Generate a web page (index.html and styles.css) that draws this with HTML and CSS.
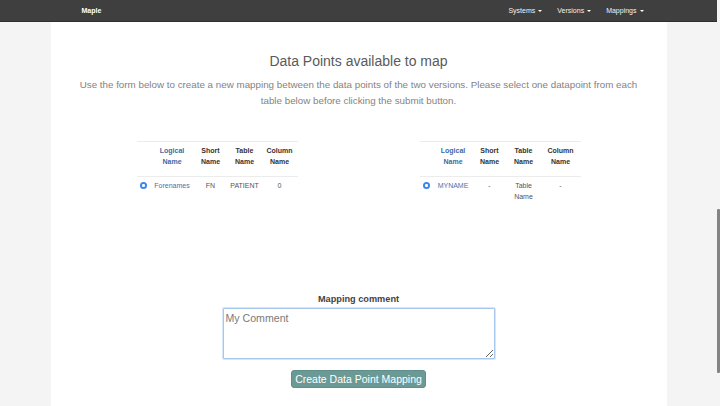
FILE: index.html
```html
<!DOCTYPE html>
<html lang="en">
<head>
<meta charset="utf-8">
<title>Maple - Data Points</title>
<link rel="stylesheet" href="styles.css">
</head>
<body>
<div class="page">
  <nav class="navbar">
    <div class="nav-inner">
      <span class="brand">Maple</span>
      <ul class="nav-menu">
        <li>Systems <span class="caret"></span></li>
        <li>Versions <span class="caret"></span></li>
        <li>Mappings <span class="caret"></span></li>
      </ul>
    </div>
  </nav>
  <main class="container">
    <h2 class="title">Data Points available to map</h2>
    <p class="lead">Use the form below to create a new mapping between the data points of the two versions. Please select one datapoint from each table below before clicking the submit button.</p>
    <div class="tables">
      <table class="dp dp-left">
        <thead>
          <tr>
            <th class="c-radio"></th>
            <th class="c-logical">Logical Name</th>
            <th class="c-short">Short Name</th>
            <th class="c-table">Table Name</th>
            <th class="c-column">Column Name</th>
          </tr>
        </thead>
        <tbody>
          <tr>
            <td class="c-radio"><span class="radio"></span></td>
            <td class="c-logical link">Forenames</td>
            <td>FN</td>
            <td>PATIENT</td>
            <td>0</td>
          </tr>
        </tbody>
      </table>
      <table class="dp dp-right">
        <thead>
          <tr>
            <th class="c-radio"></th>
            <th class="c-logical">Logical Name</th>
            <th class="c-short">Short Name</th>
            <th class="c-table">Table Name</th>
            <th class="c-column">Column Name</th>
          </tr>
        </thead>
        <tbody>
          <tr>
            <td class="c-radio"><span class="radio"></span></td>
            <td class="c-logical link">MYNAME</td>
            <td>-</td>
            <td>Table<br>Name</td>
            <td>-</td>
          </tr>
        </tbody>
      </table>
    </div>
    <form class="mapping-form">
      <label class="form-label" for="comment">Mapping comment</label>
      <textarea id="comment" class="comment" placeholder="My Comment"></textarea>
      <button type="button" class="btn">Create Data Point Mapping</button>
    </form>
  </main>
</div>
<div class="scrollbar"><div class="thumb"></div></div>
</body>
</html>
```
FILE: styles.css
```css
* { box-sizing: border-box; }
html, body { height: 100%; }
body {
  margin: 0;
  background: #f4f4f4;
  font-family: "Liberation Sans", Arial, Helvetica, sans-serif;
  overflow: hidden;
}
.page {
  width: 717px;
  height: 100%;
  display: flex;
  flex-direction: column;
}
.navbar {
  background: #3f3f3f;
  height: 22px;
  border-bottom: 1px solid #2e2e2e;
  flex: none;
}
.nav-inner {
  width: 616px;
  margin: 0 auto;
  height: 21px;
  display: flex;
  align-items: center;
  justify-content: space-between;
  padding: 0 23px 0 31px;
}
.brand {
  color: #fff;
  font-size: 7px;
  font-weight: bold;
}
.nav-menu {
  list-style: none;
  margin: 0;
  padding: 0;
  display: flex;
  gap: 15px;
}
.nav-menu li {
  color: #f2f2f2;
  font-size: 7px;
  display: flex;
  align-items: center;
  gap: 2px;
}
.caret {
  display: inline-block;
  width: 0;
  height: 0;
  border-left: 2px solid transparent;
  border-right: 2px solid transparent;
  border-top: 2px solid #fff;
  margin-left: 1px;
}
.container {
  width: 616px;
  margin: 0 auto;
  background: #fff;
  flex: 1;
  padding-top: 30px;
}
.title {
  margin: 0;
  text-align: center;
  font-size: 14px;
  line-height: 19px;
  font-weight: normal;
  color: #5a5a5a;
}
.lead {
  margin: 6px auto 0;
  width: 566px;
  text-align: center;
  font-size: 9.8px;
  line-height: 16px;
  color: #838383;
}
.tables {
  margin-top: 32px;
  display: flex;
  justify-content: center;
  gap: 122px;
  height: 152px;
  align-items: flex-start;
}
.dp {
  border-collapse: collapse;
  border-top: 1px solid #ececec;
  table-layout: fixed;
  width: 161px;
  font-size: 7px;
}
.dp th {
  font-weight: bold;
  color: #333;
  line-height: 11px;
  padding: 3px 0 9px;
  text-align: center;
  vertical-align: bottom;
  border-bottom: 1px solid #ececec;
}
.dp th.c-logical { color: #3d6aa6; }
.dp td {
  text-align: center;
  line-height: 10.5px;
  padding: 4px 0;
  color: #555;
  vertical-align: top;
}
.dp td.link { color: #4b72ad; }
.dp-left .c-radio { width: 14px; }
.dp-left .c-logical { width: 43px; }
.dp-left .c-short { width: 34px; }
.dp-left .c-table { width: 34px; }
.dp-left .c-column { width: 36px; }
.dp-right .c-radio { width: 14px; }
.dp-right .c-logical { width: 39px; }
.dp-right .c-short { width: 34px; }
.dp-right .c-table { width: 34px; }
.dp-right .c-column { width: 40px; }
.radio {
  display: inline-block;
  width: 7px;
  height: 7px;
  border-radius: 50%;
  background: #3a86f0;
  position: relative;
  top: 1px;
}
.radio::after {
  content: "";
  position: absolute;
  left: 2.25px;
  top: 2.25px;
  width: 2.5px;
  height: 2.5px;
  border-radius: 50%;
  background: #fff;
}
.mapping-form {
  display: flex;
  flex-direction: column;
  align-items: center;
}
.form-label {
  font-size: 9.2px;
  font-weight: bold;
  color: #444;
  line-height: 12px;
}
.comment {
  margin-top: 3px;
  width: 272px;
  height: 51px;
  border: 1px solid #a8c7ee;
  box-shadow: 0 0 0 1px #d6e6fa;
  border-radius: 1px;
  font-family: "Liberation Sans", Arial, sans-serif;
  font-size: 10.6px;
  padding: 3px 2px;
  resize: vertical;
  outline: none;
}
.comment::placeholder { color: #7a7a7a; }
.btn {
  margin-top: 11px;
  height: 18px;
  padding: 0 3px;
  background: #6b9996;
  border: 1px solid #5f8e8b;
  border-radius: 3px;
  color: #fff;
  font-family: "Liberation Sans", Arial, sans-serif;
  font-size: 10.5px;
  line-height: 16px;
}
.scrollbar {
  position: fixed;
  top: 0;
  right: 0;
  width: 3px;
  height: 100%;
}
.thumb {
  position: absolute;
  left: 0;
  top: 209px;
  width: 3px;
  height: 164px;
  background: #848484;
  border-radius: 1px;
}
```
